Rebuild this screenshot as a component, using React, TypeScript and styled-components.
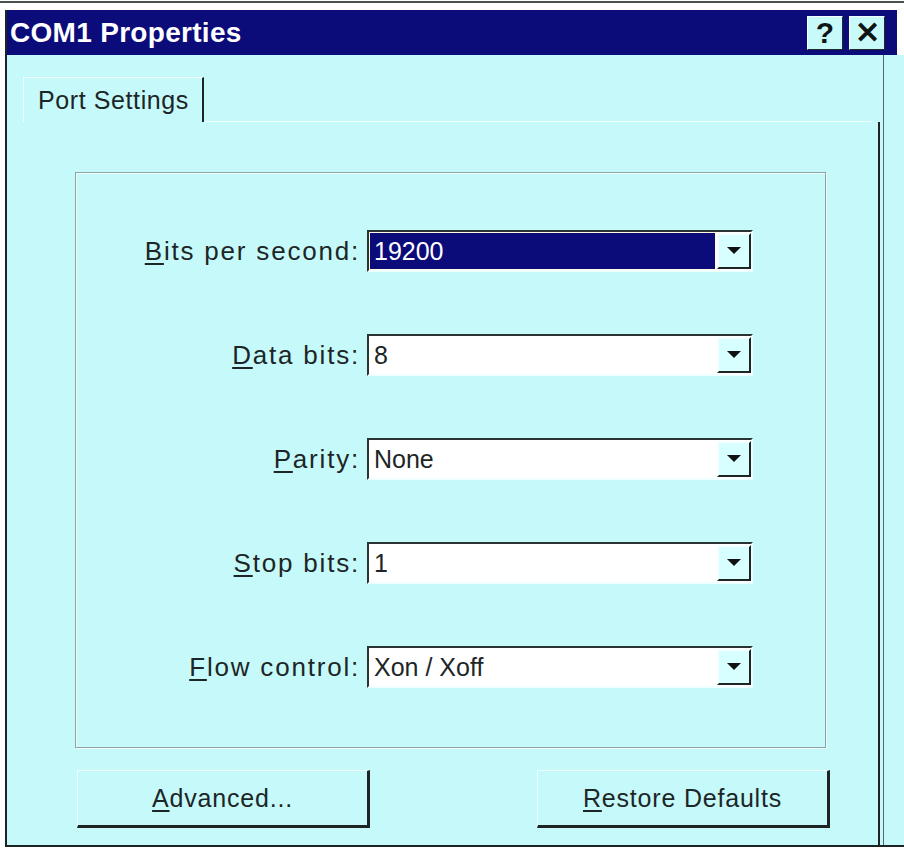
import styled, { createGlobalStyle } from "styled-components";

const GlobalStyle = createGlobalStyle`
  html, body {
    margin: 0;
    padding: 0;
    background: #ffffff;
  }
  body {
    font-family: "Liberation Sans", Arial, sans-serif;
    color: #1d2626;
  }
`;

const Screen = styled.div`
  width: 904px;
  height: 851px;
  padding-top: 1px;
  box-sizing: border-box;
  overflow: hidden;
`;

const TopRule = styled.div`
  height: 2px;
  background: #4a4f4f;
`;

const Window = styled.div`
  margin: 7px 0 0 5px;
  border-left: 2px solid #1e2424;
  display: flex;
  flex-direction: column;
`;

const TitleBar = styled.div`
  height: 45px;
  flex-shrink: 0;
  margin-right: 7px;
  background: #0b0b7a;
  display: flex;
  align-items: center;
  padding-left: 3px;
`;

const Title = styled.div`
  flex: 1;
  color: #ffffff;
  font-weight: bold;
  font-size: 28px;
  letter-spacing: 0.3px;
`;

const TitleButton = styled.div<{ $gap: number }>`
  width: 34px;
  height: 32px;
  margin-right: ${(p) => p.$gap}px;
  background: #c8fafa;
  border: 1px solid;
  border-color: #f4ffff #1e2a2a #1e2a2a #f4ffff;
  display: flex;
  align-items: center;
  justify-content: center;
  color: #0f1414;
  font-weight: bold;
  font-size: 30px;
`;

const Body = styled.div`
  height: 790px;
  background: #c6fafa;
  border-bottom: 2px solid #1e2424;
  display: flex;
`;

const Panel = styled.div`
  width: 873px;
  display: flex;
  flex-direction: column;
`;

const TabStrip = styled.div`
  height: 67px;
  flex-shrink: 0;
  display: flex;
  align-items: flex-end;
  padding-left: 16px;
`;

const Tab = styled.div`
  height: 44px;
  width: 164px;
  border-top: 1px solid #effefe;
  border-left: 1px solid #effefe;
  border-right: 2px solid #1e2424;
  display: flex;
  align-items: center;
  padding-left: 14px;
  font-size: 25px;
  letter-spacing: 0.6px;
`;

const TabRest = styled.div`
  flex: 1;
  align-self: flex-end;
  margin-right: 8px;
  border-bottom: 1px solid #effefe;
`;

const Page = styled.div`
  flex: 1;
  border-right: 2px solid #1e2424;
  padding: 50px 0 0 68px;
  display: flex;
  flex-direction: column;
  gap: 22px;
`;

const GroupBox = styled.div`
  width: 751px;
  height: 576px;
  box-sizing: border-box;
  border: 1px solid #8ea3a3;
  box-shadow: inset 1px 1px 0 #effefe, 1px 1px 0 #effefe;
  padding-top: 57px;
  display: grid;
  align-content: start;
  row-gap: 62px;
`;

const Row = styled.div`
  display: grid;
  grid-template-columns: 284px 386px;
  column-gap: 7px;
  align-items: center;
`;

const Label = styled.div`
  text-align: right;
  font-size: 26px;
  letter-spacing: 1.8px;
`;

const Key = styled.span`
  text-decoration: underline;
  text-underline-offset: 3px;
`;

const Combo = styled.div`
  height: 42px;
  box-sizing: border-box;
  border: 2px solid;
  border-color: #2c3333 #effefe #effefe #2c3333;
  background: #ffffff;
  display: flex;
  padding: 1px 0 1px 1px;
`;

const Value = styled.div<{ $selected?: boolean }>`
  flex: 1;
  margin-right: 2px;
  display: flex;
  align-items: center;
  padding-left: 4px;
  font-size: 25px;
  color: ${(p) => (p.$selected ? "#ffffff" : "#1d2626")};
  background: ${(p) => (p.$selected ? "#0b0b7a" : "transparent")};
  outline: ${(p) => (p.$selected ? "1px dotted #fff6c0" : "none")};
`;

const ArrowButton = styled.div`
  width: 34px;
  box-sizing: border-box;
  background: #d8ffff;
  border: 2px solid;
  border-color: #f6ffff #1e2424 #1e2424 #f6ffff;
  display: flex;
  align-items: center;
  justify-content: center;
`;

const ButtonRow = styled.div`
  width: 753px;
  padding-left: 2px;
  display: flex;
  justify-content: space-between;
`;

const PushButton = styled.div`
  width: 293px;
  height: 58px;
  box-sizing: border-box;
  border-top: 1px solid #effefe;
  border-left: 1px solid #effefe;
  border-right: 3px solid #1e2424;
  border-bottom: 3px solid #1e2424;
  display: flex;
  align-items: center;
  justify-content: center;
  font-size: 25px;
  letter-spacing: 0.8px;
`;

const Gutter = styled.div`
  flex: 1;
  margin-left: 3px;
  border-left: 1px solid #5a6464;
`;

const Arrow = () => (
  <svg width="14" height="8" viewBox="0 0 14 8">
    <path d="M0 0 H14 L7 7 Z" fill="#111" />
  </svg>
);

const fields = [
  { key: "B", rest: "its per second:", value: "19200", selected: true },
  { key: "D", rest: "ata bits:", value: "8" },
  { key: "P", rest: "arity:", value: "None" },
  { key: "S", rest: "top bits:", value: "1" },
  { key: "F", rest: "low control:", value: "Xon / Xoff" },
];

const App = () => {
  return (
    <Screen>
      <GlobalStyle />
      <TopRule />
      <Window>
        <TitleBar>
          <Title>COM1 Properties</Title>
          <TitleButton $gap={6}>?</TitleButton>
          <TitleButton $gap={12}>✕</TitleButton>
        </TitleBar>
        <Body>
          <Panel>
            <TabStrip>
              <Tab>Port Settings</Tab>
              <TabRest />
            </TabStrip>
            <Page>
              <GroupBox>
                {fields.map((f) => (
                  <Row key={f.key}>
                    <Label>
                      <Key>{f.key}</Key>
                      {f.rest}
                    </Label>
                    <Combo>
                      <Value $selected={f.selected}>{f.value}</Value>
                      <ArrowButton>
                        <Arrow />
                      </ArrowButton>
                    </Combo>
                  </Row>
                ))}
              </GroupBox>
              <ButtonRow>
                <PushButton>
                  <Key>A</Key>dvanced...
                </PushButton>
                <PushButton>
                  <Key>R</Key>estore Defaults
                </PushButton>
              </ButtonRow>
            </Page>
          </Panel>
          <Gutter />
        </Body>
      </Window>
    </Screen>
  );
};

export default App;
